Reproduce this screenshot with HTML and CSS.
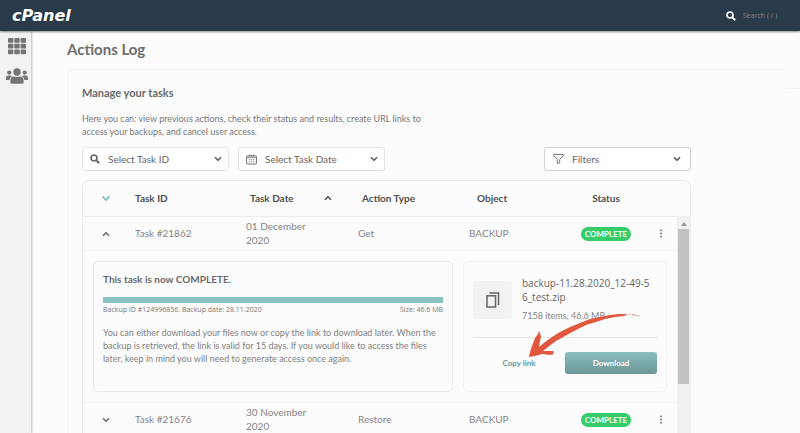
FILE: index.html
```html
<!DOCTYPE html>
<html lang="en">
<head>
<meta charset="utf-8">
<title>Actions Log</title>
<link rel="stylesheet" href="styles.css">
</head>
<body>
<svg class="defs" aria-hidden="true">
  <symbol id="chevron" viewBox="0 0 8 6"><path d="M1 1.2 4 4.3 7 1.2" fill="none" stroke="currentColor" stroke-width="1.4"/></symbol>
  <symbol id="search" viewBox="0 0 10 10"><circle cx="4" cy="4" r="3" fill="none" stroke="currentColor" stroke-width="1.7"/><path d="M6.2 6.2 9.2 9.2" stroke="currentColor" stroke-width="2"/></symbol>
  <symbol id="dots" viewBox="0 0 4 10"><circle cx="2" cy="1.5" r="1"/><circle cx="2" cy="5" r="1"/><circle cx="2" cy="8.500" r="1"/></symbol>
</svg>
<header class="topbar">
  <a class="logo" href="#">cPanel</a>
  <label class="search"><svg width="10" height="10"><use href="#search"/></svg><input type="text" placeholder="Search ( / )" aria-label="Search"></label>
</header>
<div class="shell">
  <nav class="sidebar">
    <a href="#" aria-label="Apps"><svg width="18" height="17" viewBox="0 0 18 17" fill="#747474"><rect width="5.400" height="4.700" rx=".8"/><rect x="6.300" width="5.400" height="4.700" rx=".8"/><rect x="12.600" width="5.400" height="4.700" rx=".8"/><rect y="5.800" width="5.400" height="4.700" rx=".8"/><rect x="6.300" y="5.800" width="5.400" height="4.700" rx=".8"/><rect x="12.600" y="5.800" width="5.400" height="4.700" rx=".8"/><rect y="11.600" width="5.400" height="4.700" rx=".8"/><rect x="6.300" y="11.600" width="5.400" height="4.700" rx=".8"/><rect x="12.600" y="11.600" width="5.400" height="4.700" rx=".8"/></svg></a>
    <a href="#" aria-label="Users"><svg width="22" height="16" viewBox="0 0 22 16" fill="#747474"><circle cx="11" cy="4" r="3.700"/><circle cx="3.300" cy="4.600" r="2.100"/><circle cx="18.700" cy="4.600" r="2.100"/><path d="M4.400 15.500V12.500Q4.400 8.500 8 8.500Q11 9.700 14 8.500Q17.600 8.500 17.600 12.500V15.500Q11 16 4.400 15.500ZM0 12V9.800Q0 7.500 2.300 7.500H4.500L6 8.200Q3.700 9.500 3.500 12ZM22 12V9.800Q22 7.500 19.700 7.500H17.500L16 8.200Q18.300 9.500 18.500 12Z"/></svg></a>
  </nav>
  <main class="main">
    <h1>Actions Log</h1>
    <section class="card">
      <h2>Manage your tasks</h2>
      <p class="intro">Here you can: view previous actions, check their status and results, create URL links to access your backups, and cancel user access.</p>
      <div class="filters">
        <label class="field"><svg width="10" height="10"><use href="#search"/></svg><select aria-label="Task ID"><option>Select Task ID</option></select><svg class="caret" width="8" height="6"><use href="#chevron"/></svg></label>
        <label class="field"><svg width="11" height="11" viewBox="0 0 12 11" fill="none" stroke="currentColor"><rect x=".6" y="1.600" width="10.800" height="8.800" rx=".6"/><path d="M1 3.500h10M3.500 0v2.500M6 0v2.500M8.500 0v2.500" stroke-width=".8"/><path d="M3 5.700h1.500M5.300 5.700h1.500M7.600 5.700h1.500M3 8h1.500M5.300 8h1.500M7.600 8h1.500" stroke-width=".8"/></svg><select aria-label="Task date"><option>Select Task Date</option></select><svg class="caret" width="8" height="6"><use href="#chevron"/></svg></label>
        <label class="field field-strong"><svg width="11" height="12" viewBox="0 0 12 12" fill="none" stroke="currentColor"><path d="M.8 1h10.400v1.500L7.300 6.500v3.800l-2.600.7V6.500L.8 2.500z"/></svg><select aria-label="Filters"><option>Filters</option></select><svg class="caret" width="8" height="6"><use href="#chevron"/></svg></label>
      </div>
      <div class="table-box">
        <table>
          <colgroup><col class="c-toggle"><col class="c-id"><col class="c-date"><col class="c-type"><col class="c-object"><col class="c-status"><col></colgroup>
          <thead>
            <tr><th class="center teal"><svg width="10" height="7"><use href="#chevron"/></svg></th><th>Task ID</th><th class="indent"><span class="sort">Task Date <svg class="up" width="8" height="6"><use href="#chevron"/></svg></span></th><th class="indent">Action Type</th><th class="indent-wide">Object</th><th class="center">Status</th><th></th></tr>
          </thead>
          <tbody>
            <tr><td class="center"><button class="icon" aria-label="Collapse"><svg class="up" width="8" height="6"><use href="#chevron"/></svg></button></td><td>Task #21862</td><td class="date">01 December 2020</td><td>Get</td><td>BACKUP</td><td class="center"><span class="pill">COMPLETE</span></td><td><button class="icon" aria-label="More"><svg width="4" height="9"><use href="#dots"/></svg></button></td></tr>
            <tr class="detail"><td colspan="7">
              <div class="panels">
                <div class="panel">
                  <h3>This task is now COMPLETE.</h3>
                  <div class="bar"></div>
                  <div class="meta"><span>Backup ID #124996856. Backup date: 28.11.2020</span><span>Size: 46.6 MB</span></div>
                  <p>You can either download your files now or copy the link to download later. When the backup is retrieved, the link is valid for 15 days. If you would like to access the files later, keep in mind you will need to generate access once again.</p>
                </div>
                <div class="panel panel-file">
                  <div class="file">
                    <div class="thumb"><svg width="14" height="16" viewBox="0 0 14 16" fill="none" stroke="#666" stroke-width="1.500"><rect x="1" y="3.800" width="8.500" height="11.200"/><path d="M3.500 1H12.500V13"/></svg></div>
                    <div><div class="name">backup-11.28.2020_12-49-56_test.zip</div><div class="info">7158 items, 46.6 MB</div></div>
                  </div>
                  <div class="actions"><button class="copy">Copy link</button><button class="download">Download</button></div>
                  <svg class="arrow" width="116" height="50" viewBox="0 0 116 50" fill="#e2583e" aria-hidden="true"><path d="M3 47 4 42 6 36 9 28 12 24 13 21 14 23 15 27 14 31 13 37 19 32 26 27 34 22 44 17 54 13 64 9 74 7 84 5 93 4 102 4 98 6 89 7 79 9 70 12 60 15 50 20 39 26 30 31 22 37 17 41 27 41 28 44 24 45 16 44 9 46Z"/><path d="M103 4l7 1M107 5l7 1" stroke="#e2583e" stroke-dasharray="2 1" opacity=".6"/></svg>
                </div>
              </div>
            </td></tr>
            <tr><td class="center"><button class="icon" aria-label="Expand"><svg width="8" height="6"><use href="#chevron"/></svg></button></td><td>Task #21676</td><td class="date">30 November 2020</td><td>Restore</td><td>BACKUP</td><td class="center"><span class="pill">COMPLETE</span></td><td><button class="icon" aria-label="More"><svg width="4" height="9"><use href="#dots"/></svg></button></td></tr>
          </tbody>
        </table>
        <div class="scrollbar"><svg width="6" height="4" viewBox="0 0 6 4" fill="#999"><path d="M0 4 3 0 6 4z"/></svg><div class="thumb-bar"></div></div>
      </div>
    </section>
  </main>
  <aside class="edge"></aside>
</div>
</body>
</html>
```
FILE: styles.css
```css
* { box-sizing: border-box; }
body { margin: 0; height: 100vh; overflow: hidden; display: flex; flex-direction: column; background: #fcfcfc; color: #777; font-family: Lato, "Open Sans", sans-serif; font-size: 10px; }
h1, h2, h3, p { margin: 0; }
button, select, input { font: inherit; color: inherit; border: 0; padding: 0; background: none; }
svg { display: block; flex: none; }
.defs { position: absolute; width: 0; height: 0; }
.topbar { flex: none; position: relative; z-index: 1; display: flex; align-items: center; justify-content: space-between; height: 31px; padding: 0 12px; background: #293a4a; box-shadow: 0 1px 2px rgba(0, 0, 0, .45); }
.logo { color: #fff; font: italic bold 16px/20px "DejaVu Sans", sans-serif; text-decoration: none; }
.search { display: flex; align-items: center; gap: 7px; color: #fff; }
.search input { width: 45px; font-size: 7px; font-family: "Open Sans", sans-serif; outline: 0; }
.search input::placeholder { color: #7d8790; opacity: 1; }
.shell { flex: 1; min-height: 0; display: flex; }
.sidebar { flex: none; width: 31px; display: flex; flex-direction: column; align-items: center; gap: 13px; padding: 7px 0 0 3px; background: #f2f2f2; box-shadow: 1px 0 2px rgba(0, 0, 0, .25); }
.main { flex: 1; padding: 8px 0 0 36px; }
.edge { width: 15px; margin-top: 57px; border-top: 1px solid #f3f3f3; }
h1 { font-size: 15px; line-height: 20px; color: #6e6e6e; }
.card { margin-top: 10px; padding: 15px 94px 0 14px; border: solid #f3f3f3; border-width: 1px 0 0 1px; border-top-left-radius: 6px; }
h2 { font-size: 11px; line-height: 16px; color: #6a6a6a; }
.intro { width: 350px; margin-top: 11px; font-size: 9px; line-height: 13px; }
.filters { display: flex; gap: 9px; margin-top: 9px; }
.field { position: relative; display: flex; align-items: center; gap: 8px; width: 147px; height: 24px; padding: 0 6px 0 7px; border: 1px solid #e3e3e3; border-radius: 3px; background: #fff; color: #666; }
.field-strong { margin-left: auto; padding: 0 9px 0 8px; border-color: #d0d0d0; }
.field select { flex: 1; min-width: 0; appearance: none; outline: 0; }
.field .caret { color: #555; }
.table-box { position: relative; margin-top: 9px; border: 1px solid #ececec; border-radius: 7px 7px 0 0; }
table { width: 100%; table-layout: fixed; border-collapse: collapse; }
.c-toggle { width: 52px; }
.c-id { width: 111px; }
.c-date { width: 112px; }
.c-type { width: 111px; }
.c-object { width: 86px; }
.c-status { width: 102px; }
th { height: 35px; padding: 0; text-align: left; color: #4e4e4e; border-bottom: 1px solid #ececec; }
td { height: 34px; padding: 0; line-height: 14px; color: #858585; border-bottom: 1px solid #f5f5f5; }
th.center, td.center { text-align: center; }
td:first-child, th:first-child { padding-right: 7px; }
.center svg { margin: auto; }
.indent { padding-left: 4px; }
.indent-wide { padding-left: 8px; }
.sort { display: flex; align-items: center; justify-content: space-between; width: 82px; }
.teal { color: #7bbfc1; }
.up { transform: rotate(180deg); }
.date { padding-right: 40px; }
.icon { color: #666; padding: 4px; }
td:last-child .icon { padding: 4px 2px; }
.icon svg { fill: #666; }
.pill { display: inline-block; padding: 0 4px; border-radius: 7px; background: #33cc66; color: #fff; font-size: 8px; font-weight: 700; line-height: 14px; }
.detail td { padding: 10px 23px 10px 10px; }
.panels { display: grid; grid-template-columns: 360fr 204fr; gap: 10px; }
.panel { position: relative; min-width: 0; height: 131px; padding: 10px 9px; border: 1px solid #ebebeb; border-radius: 5px; }
h3 { font-size: 10px; line-height: 14px; color: #6a6a6a; }
.bar { height: 6px; margin-top: 11px; background: #8ac2c2; }
.meta { display: flex; justify-content: space-between; font-family: "Open Sans", sans-serif; font-size: 7px; line-height: 14px; color: #777; }
.panel p { margin-top: 9px; font-size: 9px; line-height: 13px; color: #808080; }
.panel-file { border-color: #f3f3f3; }
.file { display: flex; gap: 10px; padding: 4px 0 15px; border-bottom: 1px solid #e2e2e2; }
.thumb { flex: none; display: grid; place-items: center; width: 39px; height: 38px; margin-top: 5px; border-radius: 3px; background: #f2f2f2; }
.name { padding-right: 4px; font-family: "Open Sans", sans-serif; font-size: 10px; line-height: 14px; color: #666; word-break: break-all; }
.info { margin-top: 6px; font-size: 9px; line-height: 12px; }
.actions { display: grid; grid-template-columns: 1fr 1fr; margin-top: 14px; font-size: 8px; font-weight: 700; }
.copy { color: #67999b; }
.download { height: 22px; border-radius: 3px; color: #fff; background: linear-gradient(#8abdbd, #6c9696); }
.arrow { position: absolute; left: 62px; top: 48px; }
.scrollbar { position: absolute; top: 35px; right: 0; bottom: 0; width: 13px; padding: 6px 1px 0; background: #f0f0f0; }
.scrollbar svg { margin: 0 auto 3px; }
.thumb-bar { height: 155px; background: #c1c1c1; }
```
